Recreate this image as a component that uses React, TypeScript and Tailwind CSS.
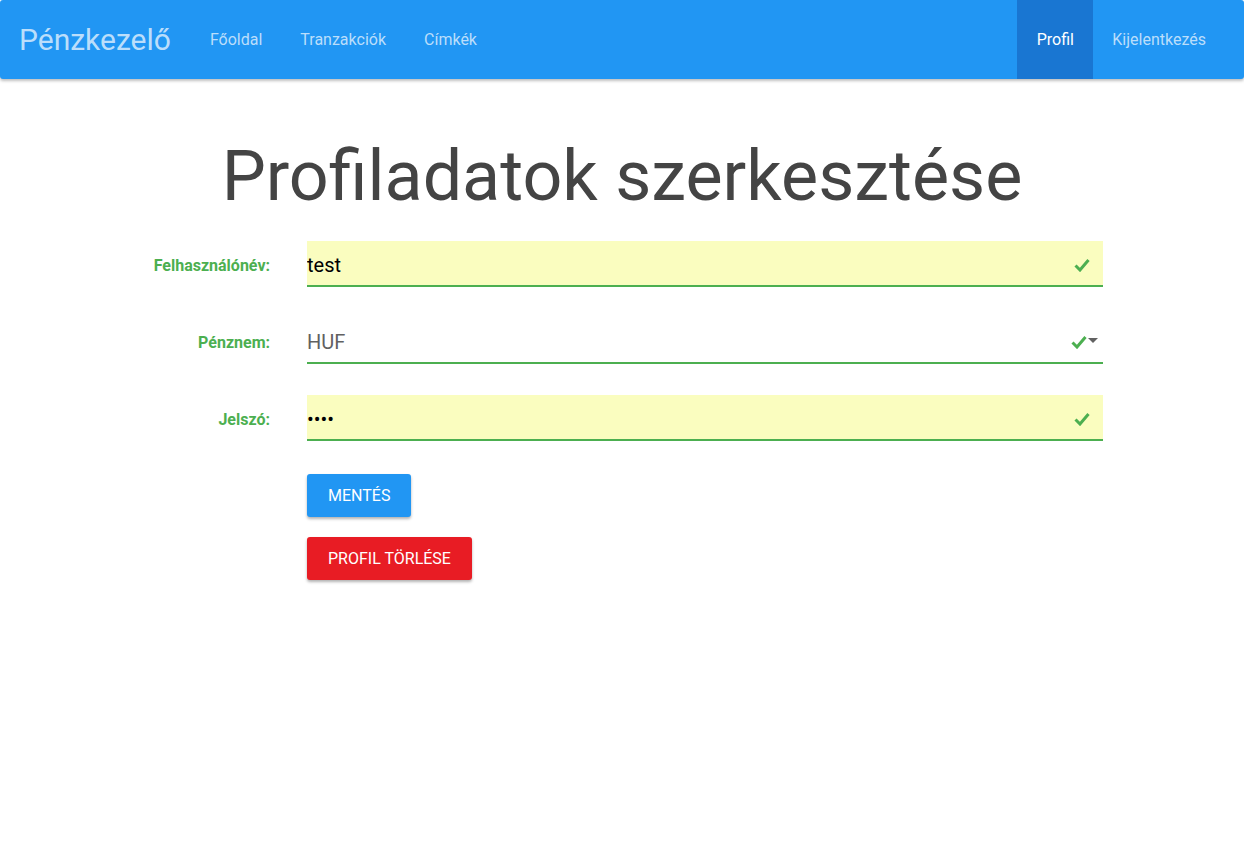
import { useState } from "react";
import type { ChangeEvent } from "react";

type Row = {
  label: string;
  name: string;
  type: string;
};

const rows: Row[] = [
  { label: "Felhasználónév:", name: "username", type: "text" },
  { label: "Pénznem:", name: "currency", type: "select" },
  { label: "Jelszó:", name: "password", type: "password" },
];

const Check = () => (
  <svg width="16" height="14" viewBox="0 0 16 14" className="shrink-0">
    <path d="M1.5 7.5 L6 12 L14.5 2" fill="none" stroke="#4caf50" strokeWidth="3" />
  </svg>
);

const App = () => {
  const [form, setForm] = useState({ username: "test", currency: "HUF", password: "test" });

  const handleChange = (e: ChangeEvent<HTMLInputElement | HTMLSelectElement>) => {
    setForm({ ...form, [e.target.name]: e.target.value });
  };

  return (
    <div className="min-h-screen bg-white" style={{ fontFamily: "Roboto, 'Noto Sans', sans-serif" }}>
      {/* Navbar */}
      <nav className="h-[79px] bg-[#2196f3] rounded-[3px] shadow-[0_2px_3px_rgba(0,0,0,0.25)] flex items-stretch">
        <div className="pl-[19px] pr-[20px] flex items-center text-[30px] text-[#bbdefb]">Pénzkezelő</div>
        <a className="px-[19px] flex items-center text-[16px] text-[#bbdefb]">Főoldal</a>
        <a className="px-[19px] flex items-center text-[16px] text-[#bbdefb]">Tranzakciók</a>
        <a className="px-[19px] flex items-center text-[16px] text-[#bbdefb]">Címkék</a>
        <div className="flex-1" />
        <a className="w-[76px] -ml-px mr-px flex items-center justify-center bg-[#1976d2] text-[16px] text-white">Profil</a>
        <a className="pl-[18px] pr-[38px] flex items-center text-[16px] text-[#bbdefb]">Kijelentkezés</a>
      </nav>

      <h1 className="text-center text-[70px] leading-none text-[#444444] mt-[62px] mb-[30px]">
        Profiladatok szerkesztése
      </h1>

      <div className="flex flex-col gap-[31px]">
        {rows.map((r) => (
          <div key={r.name} className="flex items-center">
            <label className="w-[270px] pt-[4px] text-right text-[16px] font-bold text-[#4caf50]">{r.label}</label>
            <div
              className={
                "ml-[37px] w-[796px] h-[46px] pt-[4px] flex items-center border-b-2 border-[#4caf50] " +
                (r.type === "select" ? "bg-white pr-[5px]" : "bg-[#fafdbf] pr-[13px]")
              }
            >
              {r.type === "select" ? (
                <>
                  <select
                    name={r.name}
                    value={form.currency}
                    onChange={handleChange}
                    className="flex-1 appearance-none bg-transparent outline-none text-[20px] text-[#616161]"
                  >
                    <option>HUF</option>
                    <option>EUR</option>
                    <option>USD</option>
                  </select>
                  <Check />
                  <span className="ml-[1px] w-0 h-0 border-l-[5px] border-r-[5px] border-t-[5px] border-l-transparent border-r-transparent border-t-[#616161] mb-[4px]" />
                </>
              ) : (
                <>
                  <input
                    name={r.name}
                    type={r.type}
                    value={r.name === "username" ? form.username : form.password}
                    onChange={handleChange}
                    className="flex-1 bg-transparent outline-none text-[20px] text-black"
                  />
                  <Check />
                </>
              )}
            </div>
          </div>
        ))}
      </div>

      <div className="ml-[307px] mt-[33px] flex flex-col items-start gap-[20px]">
        <button className="h-[43px] px-[21px] rounded-[3px] bg-[#2196f3] text-white text-[16px] uppercase shadow-[0_2px_3px_rgba(0,0,0,0.3)]">
          Mentés
        </button>
        <button className="h-[43px] px-[21px] rounded-[3px] bg-[#e81c24] text-white text-[16px] uppercase shadow-[0_2px_3px_rgba(0,0,0,0.3)]">
          Profil törlése
        </button>
      </div>
    </div>
  );
};

export default App;
